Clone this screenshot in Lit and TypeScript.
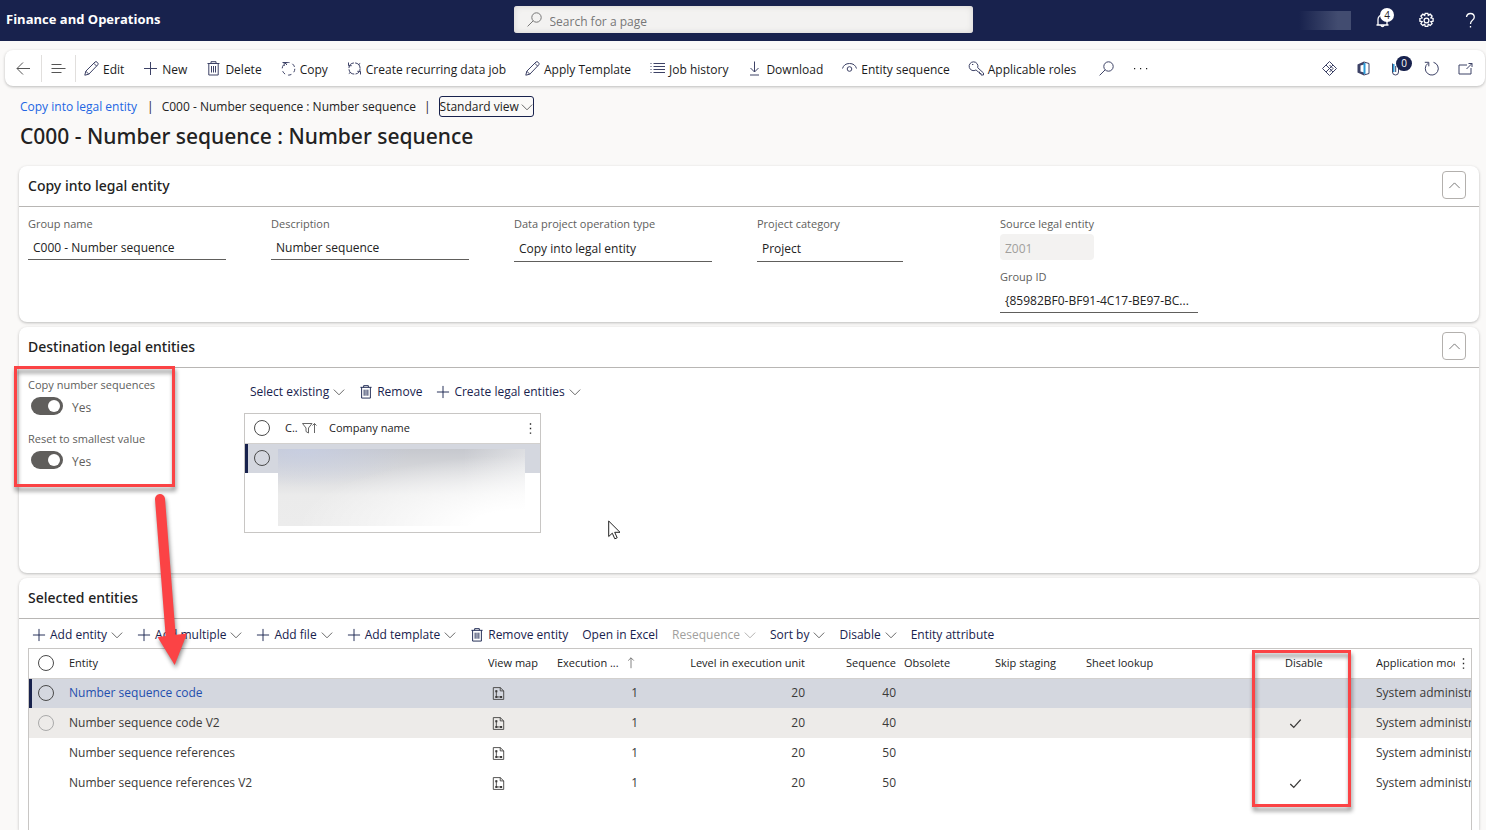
import { LitElement, html, css, svg, nothing } from "lit";
import { customElement } from "lit/decorators.js";
import { classMap } from "lit/directives/class-map.js";

const shapes = {
  back: svg`<path d="M14 7.5H1M7 1.5L1 7.5L7 13.5" />`,
  lines: svg`<path d="M.5 3.5h10M.5 7.5h14M.5 11.5h10" />`,
  pencil: svg`<path d="M.8 14.200l1-4L11 1q1-.8 2 .1l.7.7q.9 1 .1 2L4.800 13.200zM1.800 10.200l3 3M9.800 2.300l2.800 2.800" />`,
  plus: svg`<path d="M7.5 1v13M1 7.5h13" />`,
  trash: svg`<path d="M1.500 2.500h12M5 2.500V.7h5v1.800M2.800 2.500v11.500h9.400v-11.500M5.500 5v6.500M7.500 5v6.500M9.500 5v6.500" />`,
  copy: svg`<circle cx="7.500" cy="7.800" r="6.300" stroke-dasharray="3.600 3" /><path d="M3.200 5V1.500M6.500 1.500H1.500M3.500 1.500L6 4" />`,
  sync: svg`<circle cx="7.500" cy="7.500" r="5.600" stroke-dasharray="7.500 1.300" /><path d="M1.500 1.500v3.200h3.200M13.500 13.500v-3.200h-3.200M13.200 2.500l-2 1.200M1.800 12.500l2-1.200" />`,
  list: svg`<path d="M3.500 2.500H15M3.500 5.500H15M3.500 8.500H15M3.500 11.500H15" /><path stroke-dasharray="1 2" d="M1 2v11" />`,
  download: svg`<path d="M7.500 0.500v10.500M3.500 7l4 4l4-4M3 14h9" />`,
  eye: svg`<path d="M.5 7.500Q2 2.500 7.500 2.500T14.500 7.500" /><circle cx="7.500" cy="8" r="2.300" />`,
  key: svg`<path d="M8.700 6.700L14.500 12v2h-2.500v-1.500h-1.500V11H9.300L7 8.900A4.400 4.400 0 1 1 8.700 6.700zM3 3.500h1.300" />`,
  search: svg`<circle cx="9.500" cy="5.500" r="4.700" /><path d="M6.200 8.800L.6 14.400" />`,
  diamond: svg`<path d="M7.500 .5L14.500 7.500L7.500 14.500L.5 7.500zM4 4l7 7M11 4L4 11M7.500 4L11 7.500L7.500 11" />`,
  office: svg`<path class="solid" d="M1.500 3.500L8 .5v3L4.500 4.500v6L8 11.500v3L1.500 11.500z" /><path class="cyan" d="M8.500 2v11" /><path d="M8 1l5 1.500v10L8 14" />`,
  clip: svg`<path class="cyan" d="M3.500 3v8" /><path d="M2.500 2.500v8.500a3 3 0 0 0 6 0V6M5.700 5v6" />`,
  refresh: svg`<path d="M9.500 1.300A6.500 6.500 0 1 1 4 2.300M.8 1.300h4v4" />`,
  popout: svg`<path d="M9 4H1v9h12V7M8.500 8L14 2.500M10.500 2.500H14V6" />`,
  dots: svg`<path class="solid" d="M1 7h1.200v1.200H1zM7 7h1.200v1.200H7zM13 7h1.200v1.200H13z" />`,
  vdots: svg`<path class="solid" d="M6.700 1.500h1.600v1.600H6.700zM6.700 6.700h1.600v1.600H6.700zM6.700 12h1.600v1.600H6.700z" />`,
  bell: svg`<path stroke-width="1.300" d="M1.500 12h12M3 12V6.500a4.500 4.500 0 0 1 9 0V12M6 12.500a1.600 1.600 0 0 0 3 0" />`,
  gear: svg`<circle cx="7.500" cy="7.500" r="2.400" stroke-width="1.300" /><path stroke-width="1.300" d="M6.200.3h2.600l.5 2.100 1.900-1.200 1.900 1.900-1.200 1.800 2.200.5v2.800l-2.200.5 1.200 1.900-1.900 1.800-1.900-1.200-.5 2.200H6.200l-.5-2.200-1.900 1.200-1.900-1.800 1.200-1.900-2.200-.5V5.400l2.200-.5-1.200-1.800 1.900-1.900 1.900 1.200z" />`,
  help: svg`<path stroke-width="1.300" d="M3.500 4Q4 .5 7.500.5T11.300 4Q11.300 5.800 9.400 7.200T7.500 11M7.500 13v1.500" />`,
  down: svg`<path d="M1 4.500l6.500 6.500l6.500-6.500" />`,
  up: svg`<path d="M1.500 10.500l6-6l6 6" />`,
  filter: svg`<path d="M.5 2.500h9.500L6.500 7v5L4 10.500V7zM12.500 12V2.500M10.500 4.500l2-2l2 2" />`,
  arrowUp: svg`<path d="M7.500 14V1M4 4.500L7.500 1L11 4.500" />`,
  check: svg`<path stroke-width="1.500" d="M1.500 8l4 4L13.500 3" />`,
  map: svg`<path d="M1.500.7h8L13.500 4.500v9.800h-12zM9.500.7v3.800h4M5 4v7.500h6" /><path class="solid" d="M3.800 3.800h2.400v2.400H3.800zM3.800 10.300h2.400v2.400H3.800zM9.300 10.300h2.400v2.400H9.300z" />`,
};
type IconName = keyof typeof shapes;

const icon = (name: IconName, extra = "") =>
  html`<svg class="icon ${extra}" viewBox="0 0 15 15" aria-hidden="true">${shapes[name]}</svg>`;

const shared = css`
  * { box-sizing: border-box; }
  button, input, select { font: inherit; color: inherit; }
  button { border: 0; background: none; padding: 0; margin: 0; white-space: nowrap; }
  a { text-decoration: none; }
  .icon { width: 15px; height: 15px; flex: none; display: block; fill: none; stroke: currentColor; stroke-width: 1; overflow: visible; }
  .icon .solid { fill: currentColor; stroke: none; }
  .icon .cyan { stroke: #2b9bd8; stroke-width: 2; }
  .chev { width: 12px; height: 12px; color: #444; }
  .pick { appearance: none; width: 16px; height: 16px; margin: 0; border: 1px solid #4a4a4a; border-radius: 50%; display: block; }
`;

const topActions: [IconName, string][] = [
  ["pencil", "Edit"], ["plus", "New"], ["trash", "Delete"], ["copy", "Copy"],
  ["sync", "Create recurring data job"], ["pencil", "Apply Template"], ["list", "Job history"],
  ["download", "Download"], ["eye", "Entity sequence"], ["key", "Applicable roles"],
];

@customElement("app-banner")
class AppBanner extends LitElement {
  static styles = [shared, css`
    :host { display: block; background: #18224d; color: #fff; }
    .bar { display: grid; grid-template-columns: 1fr minmax(0, 459px) 1fr; align-items: center; height: 41px; }
    .brand { padding-left: 6px; font-size: 13px; font-weight: 700; line-height: 38px; align-self: start; }
    .search { display: flex; align-items: center; gap: 8px; height: 27px; padding-left: 13px; margin-bottom: 2px; border-radius: 3px; background: #f3f2f1; box-shadow: inset 0 0 6px #d4d2d0; color: #777; }
    .box { flex: 1; border: 0; background: none; padding: 4px 0 0; outline: 0; min-width: 0; }
    .box::placeholder { color: #777; opacity: 1; }
    .tools { display: flex; justify-content: flex-end; align-items: center; padding-right: 8px; }
    .user { width: 52px; height: 19px; margin-right: 24px; background: linear-gradient(90deg, #18224d, #424c70 75%); }
    .tool { position: relative; display: block; margin-right: 29px; }
    .tool:last-child { margin-right: 0; }
    .badge { position: absolute; left: 5px; top: -5px; width: 14px; height: 14px; border-radius: 50%; background: #fff; color: #222; font-size: 10px; line-height: 14px; text-align: center; }
  `];
  render() {
    return html`<header class="bar">
      <div class="brand">Finance and Operations</div>
      <label class="search">${icon("search")}<input class="box" type="text" placeholder="Search for a page" aria-label="Search for a page" /></label>
      <div class="tools">
        <div class="user"></div>
        <button class="tool" aria-label="Notifications">${icon("bell")}<span class="badge">4</span></button>
        <button class="tool" aria-label="Settings">${icon("gear")}</button>
        <button class="tool" aria-label="Help">${icon("help")}</button>
      </div>
    </header>`;
  }
}

@customElement("action-pane")
class ActionPane extends LitElement {
  static styles = [shared, css`
    :host { display: block; margin: 9px 1px 0 5px; }
    .pane { display: flex; align-items: center; height: 36px; border-radius: 8px; background: #fff; box-shadow: 0 1px 3px rgba(0, 0, 0, .25); color: #1b1b1b; }
    .nav { display: grid; place-items: center; width: 37px; height: 27px; border-right: 1px solid #e1dfdd; color: #555; }
    .nav.short { width: 34px; }
    .list { display: flex; align-items: center; flex: 1; gap: 19px; padding-left: 8px; color: #1b1b1b; }
    .item { display: flex; align-items: center; gap: 4px; }
    .item span { padding-top: 3px; }
    .item .icon, .right .icon, .lone .icon { color: #3d4266; }
    .lone { margin-left: 4px; }
    .right { display: flex; align-items: center; gap: 19px; padding-right: 12px; }
    .tool { position: relative; }
    .badge { position: absolute; left: 6px; top: -5px; width: 16px; height: 15px; border-radius: 8px; background: #18224d; color: #fff; font-size: 10px; line-height: 15px; text-align: center; }
  `];
  render() {
    return html`<div class="pane" role="toolbar">
      <button class="nav" aria-label="Back">${icon("back")}</button>
      <button class="nav short" aria-label="Show list">${icon("lines")}</button>
      <div class="list">
        ${topActions.map(([i, t]) => html`<button class="item">${icon(i)}<span>${t}</span></button>`)}
        <button class="lone" aria-label="Search">${icon("search")}</button>
        <button aria-label="More">${icon("dots")}</button>
      </div>
      <div class="right">
        <button class="tool" aria-label="Apps">${icon("diamond")}</button>
        <button class="tool" aria-label="Open in Office">${icon("office")}</button>
        <button class="tool" aria-label="Attachments">${icon("clip")}<span class="badge">0</span></button>
        <button class="tool" aria-label="Refresh">${icon("refresh")}</button>
        <button class="tool" aria-label="Open in new window">${icon("popout")}</button>
      </div>
    </div>`;
  }
}

type GridAction = { icon?: IconName; text: string; menu?: boolean; off?: boolean };

const gridActions = (items: GridAction[]) => html`<div class="actions" role="toolbar">
  ${items.map(a => html`<button class=${classMap({ action: true, off: !!a.off })} ?disabled=${!!a.off}>
    ${a.icon ? icon(a.icon, "lead") : nothing}<span>${a.text}</span>${a.menu ? icon("down", "chev") : nothing}
  </button>`)}
</div>`;

const gridStyles = css`
  .actions { display: flex; align-items: center; gap: 14px; height: 29px; color: #18224d; }
  .action { display: flex; align-items: center; gap: 4px; }
  .lead { width: 14px; height: 14px; }
  .off, .off .chev { color: #a19f9d; }
  table { border-collapse: collapse; table-layout: fixed; width: 100%; }
  th { font-weight: 400; font-size: 11px; color: #222; text-align: left; padding: 0 8px 0 0; height: 29px; white-space: nowrap; overflow: hidden; border-bottom: 1px solid #d2d0ce; }
  td { padding: 0 8px 0 0; height: 30px; white-space: nowrap; overflow: hidden; color: #3b3a39; }
  .mark { padding-left: 9px; width: 40px; }
  .num { text-align: right; }
  .current td { background: #d4d7df; }
  .current .mark { box-shadow: inset 3px 0 #18224d; }
  .hover td { background: #edebe9; }
`;

const entityActions: GridAction[] = [
  { icon: "plus", text: "Add entity", menu: true }, { icon: "plus", text: "Add multiple", menu: true },
  { icon: "plus", text: "Add file", menu: true }, { icon: "plus", text: "Add template", menu: true },
  { icon: "trash", text: "Remove entity" }, { text: "Open in Excel" },
  { text: "Resequence", menu: true, off: true }, { text: "Sort by", menu: true },
  { text: "Disable", menu: true }, { text: "Entity attribute" },
];

const entities = [
  { name: "Number sequence code", level: 20, seq: 40, disabled: false, state: "current" },
  { name: "Number sequence code V2", level: 20, seq: 40, disabled: true, state: "hover" },
  { name: "Number sequence references", level: 20, seq: 50, disabled: false, state: "" },
  { name: "Number sequence references V2", level: 20, seq: 50, disabled: true, state: "" },
];

@customElement("entity-grid")
class EntityGrid extends LitElement {
  static styles = [shared, gridStyles, css`
    :host { display: flex; flex-direction: column; flex: 1; padding: 0 7px 0 9px; }
    .actions { padding: 3px 0 0 4px; }
    .frame { position: relative; flex: 1; border: 1px solid #c8c6c4; border-bottom: 0; }
    .view { width: 69px; } .exec { width: 89px; } .level { width: 167px; } .flag { width: 91px; } .sheet { width: 199px; } .app { width: 95px; }
    .head { display: flex; align-items: center; gap: 6px; }
    .sort { width: 12px; height: 12px; color: #666; }
    .link { color: #1f4fae; }
    td.app { padding: 0; }
    td .icon { width: 13px; height: 13px; }
    .inset { padding-left: 4px; }
    .faint { border-color: #aaa; }
    .more { position: absolute; right: 0; top: 0; width: 16px; height: 28px; background: #fff; display: grid; place-items: center; }
    .more .icon { width: 13px; height: 13px; }
  `];
  render() {
    return html`${gridActions(entityActions)}
      <div class="frame"><table>
        <thead><tr>
          <th class="mark"><input class="pick" type="checkbox" aria-label="Select all" /></th>
          <th>Entity</th><th class="view">View map</th>
          <th class="exec"><div class="head">Execution ...${icon("arrowUp", "sort")}</div></th>
          <th class="level num">Level in execution unit</th><th class="flag num">Sequence</th>
          <th class="flag">Obsolete</th><th class="flag">Skip staging</th><th class="sheet">Sheet lookup</th>
          <th class="flag">Disable</th><th class="app">Application module</th>
        </tr></thead>
        <tbody>${entities.map(e => html`<tr class=${e.state}>
          <td class="mark">${e.state ? html`<input class="pick ${e.state === "hover" ? "faint" : ""}" type="checkbox" aria-label=${`Select ${e.name}`} />` : nothing}</td>
          <td>${e.state === "current" ? html`<a class="link" href="#">${e.name}</a>` : e.name}</td>
          <td class="inset">${icon("map")}</td>
          <td class="num">1</td><td class="num">${e.level}</td><td class="num">${e.seq}</td>
          <td></td><td></td><td></td>
          <td class="inset">${e.disabled ? icon("check") : nothing}</td>
          <td class="app">System administration</td>
        </tr>`)}</tbody>
      </table><button class="more" aria-label="Grid options">${icon("vdots")}</button></div>`;
  }
}

@customElement("company-grid")
class CompanyGrid extends LitElement {
  static styles = [shared, gridStyles, css`
    :host { display: block; width: 345px; }
    .actions { padding-left: 6px; margin-bottom: 7px; }
    .frame { position: relative; width: 297px; min-height: 120px; border: 1px solid #c8c6c4; }
    .code { width: 44px; }
    .menu { width: 16px; padding: 0; }
    .head { display: flex; align-items: center; gap: 4px; }
    .head .icon { color: #666; }
    .menu .icon { width: 13px; height: 13px; }
    .veil { position: absolute; left: 33px; top: 35px; width: 247px; height: 77px;
      background: radial-gradient(ellipse at 100% 100%, #fff 15%, transparent 65%), radial-gradient(ellipse at 10% 0%, rgba(200, 208, 232, .7), transparent 35%), linear-gradient(90deg, transparent 75%, rgba(255, 255, 255, .4)), linear-gradient(#c6c8ce, #d8d9dc 30%, #ebebeb 60%, #ececec); }
  `];
  render() {
    return html`${gridActions([{ text: "Select existing", menu: true }, { icon: "trash", text: "Remove" }, { icon: "plus", text: "Create legal entities", menu: true }])}
      <div class="frame"><table>
        <thead><tr>
          <th class="mark"><input class="pick" type="checkbox" aria-label="Select all companies" /></th>
          <th class="code"><div class="head">C..${icon("filter")}</div></th>
          <th>Company name</th>
          <th class="menu">${icon("vdots")}</th>
        </tr></thead>
        <tbody><tr class="current">
          <td class="mark"><input class="pick" type="checkbox" aria-label="Select company" /></td><td></td><td></td><td></td>
        </tr></tbody>
      </table><div class="veil"></div></div>`;
  }
}

@customElement("app-root")
class AppRoot extends LitElement {
  static styles = [shared, css`
    :host { position: relative; display: flex; flex-direction: column; height: 100vh; overflow: hidden; background: #faf9f8; color: #222; font: 12px/16px "Open Sans", "Noto Sans", sans-serif; }
    .crumbs { display: flex; align-items: center; gap: 8px; margin: 10px 0 0 20px; height: 21px; }
    .crumb-link { color: #2266e3; padding-right: 2px; }
    .view { display: flex; align-items: center; gap: 2px; height: 21px; padding: 0; border: 1px solid #18224d; border-radius: 3px; }
    h1, h2 { font-family: "Noto Sans", "Open Sans", sans-serif; font-weight: 500; }
    h1 { margin: 4px 0 0 20px; font-size: 21px; line-height: 30px; }
    .card { margin: 0 7px 5px 19px; background: #fff; border-radius: 8px; box-shadow: 0 1px 3px rgba(0, 0, 0, .25); }
    .first { margin-top: 15px; }
    .last { flex: 1; display: flex; flex-direction: column; margin-bottom: 0; border-radius: 8px 8px 0 0; }
    .top { display: flex; justify-content: space-between; align-items: center; height: 41px; padding: 0 13px 2px 9px; border-bottom: 1px solid #b8b6b4; }
    h2 { margin: 0; padding-top: 2px; font-size: 14px; line-height: 20px; }
    .fold { display: grid; place-items: center; width: 24px; height: 28px; border: 1px solid #b3b0ad; border-radius: 4px; color: #666; }
    .fold .icon { width: 13px; height: 13px; }
    .fields { display: flex; padding: 9px; }
    .stack { width: 243px; display: flex; flex-direction: column; gap: 9px; }
    .field { display: flex; flex-direction: column; align-items: flex-start; gap: 2px; }
    .name { font-size: 11px; color: #605e5c; }
    .value { width: 198px; height: 26px; padding: 2px 8px 0 5px; border: 0; border-bottom: 1px solid #605e5c; border-radius: 0; background: none; appearance: none; outline: 0; text-overflow: ellipsis; }
    select.value { height: 28px; }
    .value.mid { width: 146px; }
    .value.locked { width: 94px; border: 0; border-radius: 4px; background: #f3f2f1; color: #a19f9d; }
    .dest { display: flex; padding: 9px 9px 40px; }
    .toggles { width: 216px; display: flex; flex-direction: column; gap: 16px; }
    .toggle { display: flex; flex-direction: column; gap: 4px; color: #605e5c; }
    .state { display: flex; align-items: center; gap: 9px; padding-left: 3px; height: 18px; }
    .state span { padding-top: 3px; }
    .switch { position: relative; appearance: none; width: 32px; height: 18px; margin: 0; border-radius: 9px; background: #605e5c; }
    .switch::after { content: ""; position: absolute; right: 3px; top: 3px; width: 12px; height: 12px; border-radius: 50%; background: #fff; }
    .outline { position: absolute; border: 3px solid #fb4345; filter: drop-shadow(1px 4px 2px rgba(0, 0, 0, .45)); pointer-events: none; }
    .settings { left: 14px; top: 366px; width: 161px; height: 121px; }
    .column { right: 135px; top: 650px; width: 99px; height: 157px; }
    .arrow { position: absolute; left: 145px; top: 485px; width: 55px; height: 190px; filter: drop-shadow(1px 3px 2px rgba(0, 0, 0, .45)); pointer-events: none; }
    .pointer { position: absolute; left: 608px; top: 520px; width: 13px; height: 20px; }
  `];

  private field(id: string, label: string, value: string, kind = "") {
    const control = kind.startsWith("select")
      ? html`<select id=${id} class="value ${kind.endsWith("mid") ? "mid" : ""}"><option>${value}</option></select>`
      : html`<input id=${id} class="value ${kind}" type="text" .value=${value} ?disabled=${kind === "locked"} readonly />`;
    return html`<div class="field"><label class="name" for=${id}>${label}</label>${control}</div>`;
  }

  private toggle(id: string, label: string) {
    return html`<div class="toggle"><label class="name" for=${id}>${label}</label>
      <div class="state"><input id=${id} class="switch" type="checkbox" role="switch" checked /><span>Yes</span></div></div>`;
  }

  private top(title: string, fold = true) {
    return html`<div class="top"><h2>${title}</h2>${fold ? html`<button class="fold" aria-label="Collapse">${icon("up")}</button>` : nothing}</div>`;
  }

  render() {
    return html`
      <app-banner></app-banner>
      <action-pane></action-pane>
      <nav class="crumbs">
        <a class="crumb-link" href="#">Copy into legal entity</a><span>|</span>
        <span>C000 - Number sequence : Number sequence</span><span>|</span>
        <button class="view">Standard view${icon("down", "chev")}</button>
      </nav>
      <h1>C000 - Number sequence : Number sequence</h1>
      <section class="card first">
        ${this.top("Copy into legal entity")}
        <div class="fields">
          <div class="stack">${this.field("group", "Group name", "C000 - Number sequence")}</div>
          <div class="stack">${this.field("desc", "Description", "Number sequence")}</div>
          <div class="stack">${this.field("type", "Data project operation type", "Copy into legal entity", "select")}</div>
          <div class="stack">${this.field("cat", "Project category", "Project", "select-mid")}</div>
          <div class="stack">
            ${this.field("source", "Source legal entity", "Z001", "locked")}
            ${this.field("gid", "Group ID", "{85982BF0-BF91-4C17-BE97-BC...")}
          </div>
        </div>
      </section>
      <section class="card">
        ${this.top("Destination legal entities")}
        <div class="dest">
          <div class="toggles">${this.toggle("copyseq", "Copy number sequences")}${this.toggle("reset", "Reset to smallest value")}</div>
          <company-grid></company-grid>
        </div>
      </section>
      <section class="card last">
        ${this.top("Selected entities", false)}
        <entity-grid></entity-grid>
      </section>
      <div class="outline settings"></div>
      <div class="outline column"></div>
      <svg class="arrow" viewBox="145 485 55 190" aria-hidden="true">
        <path d="M160 499L171 640" stroke="#fb4345" stroke-width="10" stroke-linecap="round" />
        <path d="M157.500 637L187 633.500L174.700 665z" fill="#fb4345" />
      </svg>
      <svg class="pointer" viewBox="0 0 13 20" aria-hidden="true">
        <path d="M.7 1v15.500l3.600-3.300l2.500 5.600l2.400-1l-2.500-5.500H12z" fill="#fff" stroke="#222" stroke-width="1" />
      </svg>`;
  }
}
